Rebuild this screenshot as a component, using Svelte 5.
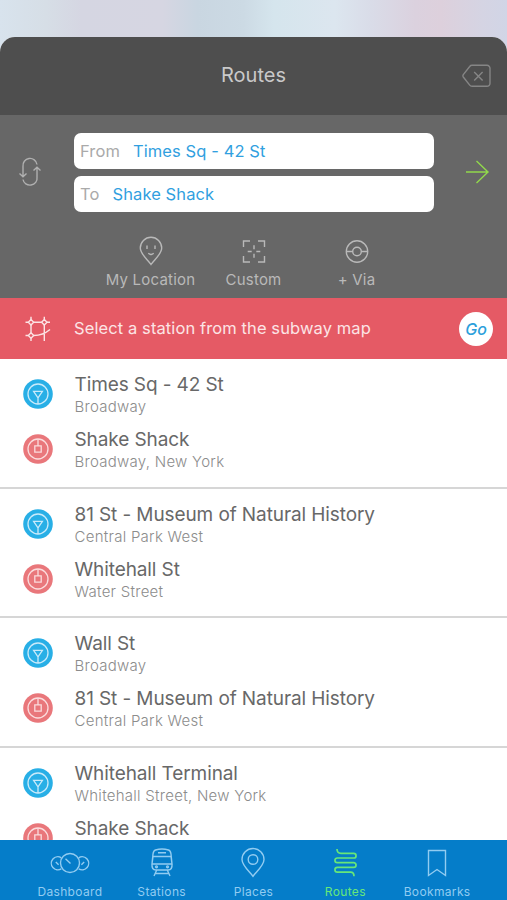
<script>
  // Current values of the search fields
  let from = 'Times Sq - 42 St';
  let to = 'Shake Shack';
  let activeTab = 'Routes';

  // Recently searched routes
  const routes = [
    {
      start: { name: 'Times Sq - 42 St', street: 'Broadway' },
      end: { name: 'Shake Shack', street: 'Broadway, New York' }
    },
    {
      start: { name: '81 St - Museum of Natural History', street: 'Central Park West' },
      end: { name: 'Whitehall St', street: 'Water Street' }
    },
    {
      start: { name: 'Wall St', street: 'Broadway' },
      end: { name: '81 St - Museum of Natural History', street: 'Central Park West' }
    },
    {
      start: { name: 'Whitehall Terminal', street: 'Whitehall Street, New York' },
      end: { name: 'Shake Shack' }
    }
  ];

  const tabs = ['Dashboard', 'Stations', 'Places', 'Routes', 'Bookmarks'];

  // Swap the start and the destination
  function swap() {
    [from, to] = [to, from];
  }
</script>

<div class="screen">
  <div class="sheet">
    <header>
      <h1>Routes</h1>
      <button class="clear" aria-label="Clear">
        <svg width="30" height="26" viewBox="0 0 30 26">
          <path d="M10 2.3h15a3 3 0 0 1 3 3v15a3 3 0 0 1-3 3H10q-1.4 0-2.3-1.2L1.3 14q-.8-1.2 0-2.4l6.4-8.1Q8.6 2.3 10 2.3z" />
          <path d="m12.2 9 8.4 8.600m0-8.600-8.400 8.600" />
        </svg>
      </button>
    </header>

    <!-- Search form -->
    <section class="search">
      <div class="fields">
        <button class="swap" aria-label="Swap" on:click={swap}>
          <svg width="24" height="32" viewBox="0 0 24 32">
            <path d="M19 8.500a7 7 0 0 0-14 2v10M1.500 17.500 5 20.800l3.500-3.300M5 23.500a7 6.500 0 0 0 14-2v-10M15.500 14.500 19 11.200l3.500 3.300" />
          </svg>
        </button>
        <div class="inputs">
          <div class="field"><span>From</span><b>{from}</b></div>
          <div class="field"><span>To</span><b>{to}</b></div>
        </div>
        <button class="search-go" aria-label="Search">
          <svg width="26" height="26" viewBox="0 0 26 26">
            <path d="M2 13h22M12.500 2 24 13 12.500 24" />
          </svg>
        </button>
      </div>

      <div class="options">
        <button>
          <svg width="26" height="30" viewBox="0 0 26 30">
            <path d="M13 28.500C10.500 24.500 2.300 18.200 2.300 12a10.700 10.700 0 0 1 21.400 0c0 6.200-8.200 12.500-10.700 16.500zM9 9.500v3.500m8-3.500v3.500M10.300 17.200q2.700 2.500 5.400 0" />
          </svg>
          My Location
        </button>
        <button>
          <svg width="26" height="30" viewBox="0 0 26 30">
            <path d="M2.500 11V5h6.500m8 0h6.500v6m0 9v6h-6.500m-8 0H2.500v-6M13 9.200v4m0 4.600v4M6.700 15.500h4m4.600 0h4" />
          </svg>
          Custom
        </button>
        <button>
          <svg width="26" height="30" viewBox="0 0 26 30">
            <circle cx="13" cy="15.500" r="10.700" />
            <circle cx="13" cy="15.500" r="4.300" />
            <path d="M2.300 15.500h6.400m8.600 0h6.400" />
          </svg>
          + Via
        </button>
      </div>
    </section>

    <!-- Map hint -->
    <section class="banner">
      <svg width="28" height="28" viewBox="0 0 28 28">
        <path d="M7 4.500 9.700 7.200 7 9.900 4.300 7.200zM20.300 4.500 23 7.200 20.300 9.900 17.600 7.200zM7 17.800 9.700 20.500 7 23.200 4.300 20.500z" />
        <path d="M7 1.800v2.700m0 5.400v7.900m0 5.400V26M1.500 7.200h2.800m5.400 0h7.900m5.400 0H26M20.300 1.800v2.700m0 5.400V26M1.500 20.500h2.800m5.400 0c7 0 11-1.500 16.300-6" />
      </svg>
      <p>Select a station from the subway map</p>
      <button class="go">Go</button>
    </section>

    <!-- Route history -->
    <ul class="routes">
      {#each routes as route}
        <li>
          <div class="stop">
            <svg width="30" height="30" viewBox="0 0 30 30">
              <circle class="start" cx="15" cy="15" r="14.8" />
              <circle cx="15" cy="15" r="10" />
              <path d="M10.600 12.300h8.800L15 18.800zM15 18.800V25" />
            </svg>
            <div class="text">
              <div class="name">{route.start.name}</div>
              <div class="street">{route.start.street}</div>
            </div>
          </div>
          <div class="stop destination">
            <svg width="30" height="30" viewBox="0 0 30 30">
              <circle class="end" cx="15" cy="15" r="14.8" />
              <circle cx="15" cy="15" r="10" />
              <path d="M11.800 11.800h6.400v6.400h-6.400zM15 5v6.800" />
            </svg>
            <div class="text">
              <div class="name">{route.end.name}</div>
              {#if route.end.street}
                <div class="street">{route.end.street}</div>
              {/if}
            </div>
          </div>
        </li>
      {/each}
    </ul>
  </div>

  <nav>
    {#each tabs as tab}
      <button class:active={tab === activeTab} on:click={() => (activeTab = tab)}>
        <svg width="42" height="32" viewBox="0 0 42 32">
          {#if tab === 'Dashboard'}
            <circle cx="21" cy="16" r="9.5" />
            <path d="m16.500 11.800 5 4.700M12.300 10.800a6.500 6.500 0 1 0 0 11M29.700 10.800a6.500 6.500 0 1 1 0 11M6.800 15l2.800 2.800M35.200 15l-2.800 2.800" />
          {:else if tab === 'Stations'}
            <path d="M14.500 3q6.500-2 13 0 2 .6 2.500 4l1 10q.5 6-4 6H15q-4.500 0-4-6l1-10q.5-3.400 2.500-4zM17 5.800h8M12 9.500h18l1 7.500H11zM15.500 23.500 13 29m13.500-5.500L29 29M14.500 26.500h13" />
            <circle cx="15.5" cy="19.8" r=".9" />
            <circle cx="26.5" cy="19.8" r=".9" />
          {:else if tab === 'Places'}
            <path d="M21 29.300c-2.500-4-11-10.500-11-16.800a11 11 0 0 1 22 0c0 6.300-8.500 12.800-11 16.800z" />
            <circle cx="21" cy="12.5" r="4.8" />
          {:else if tab === 'Routes'}
            <path class="line" d="M13 2q0 4.300 4 4.300h12.700a2.350 2.350 0 0 1 0 4.700H13.300a2.350 2.350 0 0 0 0 4.700h16.400a2.350 2.350 0 0 1 0 4.700H13.300a2.350 2.350 0 0 0 0 4.700H26.500q3.500 0 3.500 4.200" />
          {:else}
            <path d="M12.500 3.500h17v25L21 22.500l-8.500 6z" />
          {/if}
        </svg>
        <span>{tab}</span>
      </button>
    {/each}
  </nav>
</div>

<style>
  :global(body) {
    margin: 0;
  }
  .screen {
    display: flex;
    flex-direction: column;
    box-sizing: border-box;
    width: 507px;
    height: 900px;
    padding-top: 37px;
    overflow: hidden;
    font-family: Inter, 'Liberation Sans', sans-serif;
    background: linear-gradient(90deg, #d8e3ed 0, #d6dee6 9%, #d5d6e2 16%, #d6d6e2 32%, #c9d6e1 39%, #ccdae4 48%, #d5e5ed 54%, #dce6ef 66%, #d9dce8 73%, #dbd1de 82%, #ddd0dc 87%, #d5d4e3 95%, #d1d5e6 100%);
  }
  button {
    margin: 0;
    padding: 0;
    border: none;
    background: none;
    color: inherit;
    font-family: inherit;
  }
  svg {
    display: block;
    flex: none;
    fill: none;
    stroke: currentColor;
    stroke-width: 1.4;
  }
  /* Sheet that holds everything above the tab bar */
  .sheet {
    flex: 1;
    min-height: 0;
    overflow: hidden;
    border-radius: 15px 15px 0 0;
    background: #fff;
  }
  header {
    display: grid;
    grid-template-columns: 1fr auto 1fr;
    align-items: center;
    height: 78px;
    padding: 0 15px;
    box-sizing: border-box;
    background: #4e4e4e;
    color: #c9c9c9;
  }
  h1 {
    grid-column: 2;
    margin: 0;
    padding-bottom: 2px;
    font-size: 20px;
    font-weight: 400;
  }
  .clear {
    justify-self: end;
    color: #858585;
  }
  /* Search form */
  .search {
    height: 183px;
    box-sizing: border-box;
    padding-top: 18px;
    background: #676767;
    color: #b9b9b9;
  }
  .fields {
    display: grid;
    grid-template-columns: 74px 360px 73px;
    align-items: center;
  }
  .swap {
    padding: 0 0 1px 18px;
    color: #b0b0b0;
  }
  .search-go {
    padding: 0 0 1px 30px;
    color: #91d84c;
  }
  .inputs {
    display: grid;
    gap: 7px;
  }
  .field {
    display: flex;
    gap: 13px;
    align-items: center;
    height: 36px;
    box-sizing: border-box;
    padding: 0 0 1px 6px;
    border-radius: 7px;
    background: #fff;
    color: #aaa;
    font-size: 16.5px;
    letter-spacing: 0.1px;
  }
  .field b {
    color: #319fe0;
    font-weight: 400;
  }
  .options {
    display: grid;
    grid-template-columns: repeat(3, 103px);
    justify-content: center;
    padding-top: 24px;
  }
  .options button {
    display: flex;
    flex-direction: column;
    align-items: center;
    gap: 5px;
    font-size: 15px;
    line-height: 18px;
    letter-spacing: 0.2px;
    white-space: nowrap;
  }
  /* Map hint */
  .banner {
    display: flex;
    align-items: center;
    height: 61px;
    box-sizing: border-box;
    padding: 0 14px 0 24px;
    background: #e55a65;
    color: #fce4e5;
  }
  .banner p {
    flex: 1;
    margin: 0 0 0 22px;
    padding-bottom: 2px;
    font-size: 16.5px;
    letter-spacing: 0.1px;
  }
  .go {
    width: 34px;
    height: 34px;
    border-radius: 50%;
    background: #fff;
    color: #2c9fdb;
    font-size: 16px;
    font-style: italic;
    font-weight: 500;
  }
  /* Route history */
  .routes {
    margin: 0;
    padding: 0;
    list-style: none;
  }
  li {
    height: 129.5px;
    box-sizing: border-box;
    padding: 12px 0 0 22.5px;
    border-bottom: 2px solid #d6d6d6;
  }
  .stop {
    display: flex;
    gap: 22px;
    height: 55px;
  }
  .stop svg {
    margin-top: 8px;
    color: #c9eafa;
    stroke-width: 1.3;
  }
  .destination svg {
    color: #fbdcdd;
  }
  .stop .start {
    fill: #28afe6;
    stroke: none;
  }
  .stop .end {
    fill: #e9777b;
    stroke: none;
  }
  .name {
    color: #686868;
    font-size: 19px;
    line-height: 27px;
    letter-spacing: -0.1px;
  }
  .street {
    color: #8c8c8c;
    font-size: 15px;
    font-weight: 300;
    line-height: 18px;
    letter-spacing: 0.27px;
  }
  /* Tab bar */
  nav {
    display: grid;
    grid-template-columns: repeat(5, 1fr);
    height: 60px;
    padding: 0 24px;
    background: #057dc9;
    color: #92ccf1;
  }
  nav button {
    display: flex;
    flex-direction: column;
    align-items: center;
    padding-top: 7px;
    font-size: 12px;
    line-height: 16px;
    letter-spacing: 0.35px;
  }
  nav span {
    margin-top: 5px;
  }
  nav .active {
    color: #67e779;
  }
  .line {
    stroke-width: 1.7;
  }
</style>
